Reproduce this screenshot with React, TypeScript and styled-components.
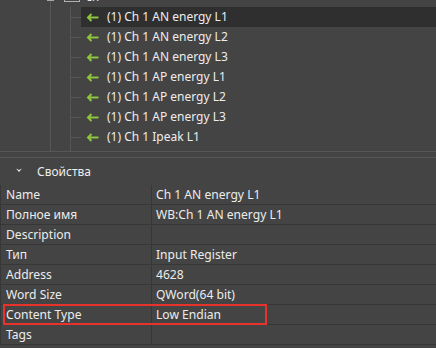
import React from "react";
import styled, { createGlobalStyle } from "styled-components";

const Global = createGlobalStyle`
  html, body { margin: 0; padding: 0; background: #444444; }
  body { font-family: "Noto Sans", "Open Sans", sans-serif; color: #ececec; overflow: hidden; }
  * { box-sizing: border-box; }
`;

const Page = styled.div`
  width: 436px;
  height: 348px;
  display: flex;
  flex-direction: column;
  background: #444444;
`;

const TreePanel = styled.div`
  height: 152px;
  overflow: hidden;
  border-bottom: 1px solid #575757;
`;

const TreeScroll = styled.div`
  margin-top: -13px;
  display: flex;
  flex-direction: column;
`;

const TreeRow = styled.div`
  display: grid;
  grid-template-columns: 40px 20px 21px 1fr;
  height: 20px;
`;

const lineColor = "#565656";

const Guide = styled.div<{ $connector?: boolean }>`
  position: relative;
  background-image: linear-gradient(${lineColor}, ${lineColor})
    ${(p) => (p.$connector ? `, linear-gradient(${lineColor}, ${lineColor})` : "")};
  background-repeat: no-repeat;
  background-position: 10px 0 ${(p) => (p.$connector ? ", 10px 10px" : "")};
  background-size: 1px 100% ${(p) => (p.$connector ? ", 11px 1px" : "")};
`;

const ParentCell = styled.div`
  display: flex;
  align-items: flex-end;
  padding: 0 0 5px 4px;
`;

const Expander = styled.span`
  position: absolute;
  left: 7px;
  top: 7px;
  width: 7px;
  height: 7px;
  border: 1px solid #a8a8a8;
  background: #444;
`;

const CheckBox = styled.span`
  width: 16px;
  height: 13px;
  border: 1px solid #b0b0b0;
`;

const ItemCell = styled.div<{ $selected?: boolean }>`
  display: flex;
  align-items: center;
  gap: 8px;
  padding-left: 5px;
  background: ${(p) => (p.$selected ? "#2f2f2f" : "transparent")};
  font-size: 12px;
  white-space: nowrap;
  color: #ededed;
`;

const Label = styled.span`
  line-height: 20px;
`;

const ArrowIcon = () => (
  <svg width="13" height="9" viewBox="0 0 13 9" style={{ flex: "none" }}>
    <path d="M12.5 4.5H2 M5.5 1L2 4.5L5.5 8" fill="none" stroke="#8cc43e" strokeWidth="2" />
  </svg>
);

const Splitter = styled.div`
  height: 5px;
`;

const PropsPanel = styled.div`
  flex: 1;
  border-top: 1px solid #575757;
  display: flex;
  flex-direction: column;
`;

const SectionHeader = styled.div`
  height: 27px;
  display: flex;
  align-items: center;
  gap: 15px;
  padding-left: 16px;
  font-size: 12px;
  color: #ededed;
`;

const Caret = () => (
  <svg width="6" height="5" viewBox="0 0 6 5" style={{ flex: "none", marginTop: "-3px" }}>
    <path d="M0 0.5L3 4L6 0.5L3 2Z" fill="#f0f0f0" />
  </svg>
);

const Table = styled.div`
  display: flex;
  flex-direction: column;
`;

const gridLine = "#373737";

const PropRow = styled.div`
  position: relative;
  display: grid;
  grid-template-columns: 152px 1fr;
  height: 20px;
  border-bottom: 1px solid ${gridLine};
  font-size: 12.1px;
  color: #ececec;
`;

const NameCell = styled.div`
  display: flex;
  align-items: center;
  padding-left: 5px;
  border-right: 1px solid ${gridLine};
  border-left: 1px solid ${gridLine};
  white-space: nowrap;
`;

const ValueCell = styled.div`
  display: flex;
  align-items: center;
  padding-left: 4px;
  white-space: nowrap;
`;

const Highlight = styled.div`
  position: absolute;
  left: 3px;
  top: -1px;
  width: 264px;
  height: 21px;
  border: 2px solid #e8332d;
  pointer-events: none;
`;

const items = [
  "(1) Ch 1 AN energy L1",
  "(1) Ch 1 AN energy L2",
  "(1) Ch 1 AN energy L3",
  "(1) Ch 1 AP energy L1",
  "(1) Ch 1 AP energy L2",
  "(1) Ch 1 AP energy L3",
  "(1) Ch 1 Ipeak L1",
];

const props: { name: string; value: string; highlight?: boolean }[] = [
  { name: "Name", value: "Ch 1 AN energy L1" },
  { name: "Полное имя", value: "WB:Ch 1 AN energy L1" },
  { name: "Description", value: "" },
  { name: "Тип", value: "Input Register" },
  { name: "Address", value: "4628" },
  { name: "Word Size", value: "QWord(64 bit)" },
  { name: "Content Type", value: "Low Endian", highlight: true },
  { name: "Tags", value: "" },
];

export default function App() {
  return (
    <Page>
      <Global />
      <TreePanel>
        <TreeScroll>
          <TreeRow>
            <div />
            <Guide>
              <Expander />
            </Guide>
            <ParentCell>
              <CheckBox />
            </ParentCell>
            <ItemCell>
              <Label>ch</Label>
            </ItemCell>
          </TreeRow>
          {items.map((t, i) => (
            <TreeRow key={t}>
              <div />
              <Guide />
              <Guide $connector />
              <ItemCell $selected={i === 0}>
                <ArrowIcon />
                <Label>{t}</Label>
              </ItemCell>
            </TreeRow>
          ))}
          <TreeRow>
            <div />
            <Guide />
            <Guide />
            <ItemCell />
          </TreeRow>
        </TreeScroll>
      </TreePanel>
      <Splitter />
      <PropsPanel>
        <SectionHeader>
          <Caret />
          <span>Свойства</span>
        </SectionHeader>
        <Table>
          {props.map((p) => (
            <PropRow key={p.name}>
              <NameCell>{p.name}</NameCell>
              <ValueCell>{p.value}</ValueCell>
              {p.highlight && <Highlight />}
            </PropRow>
          ))}
        </Table>
      </PropsPanel>
    </Page>
  );
}
